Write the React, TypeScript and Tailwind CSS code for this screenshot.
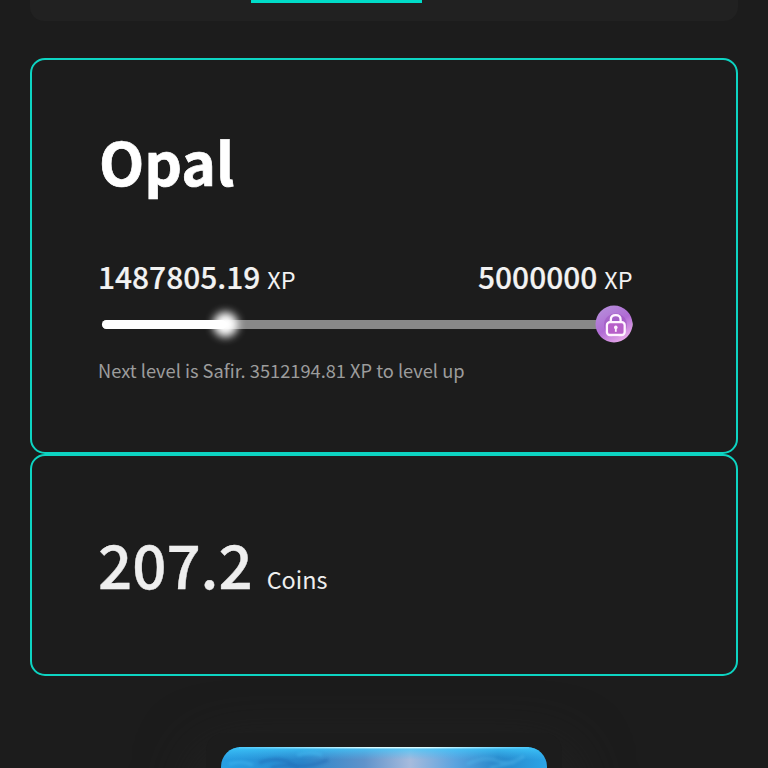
import React from 'react';

interface AmountProps {
  value: string;
  unit: string;
}

const XpAmount: React.FC<AmountProps> = ({ value, unit }) => (
  <div className="flex items-baseline gap-[7px] whitespace-nowrap leading-[44px] text-[#f2f2f2]">
    <span className="text-[29.9px] font-medium [-webkit-text-stroke:0.2px_#f2f2f2]">{value}</span>
    <span className="text-[23.4px]">{unit}</span>
  </div>
);

const LockBadge: React.FC = () => (
  <svg className="absolute right-0 -top-[15px] h-[38px] w-[38px]" viewBox="0 0 38 38" fill="none">
    <defs>
      <linearGradient id="badge" x1="8" y1="4" x2="28" y2="36" gradientUnits="userSpaceOnUse">
        <stop stopColor="#b58ada" />
        <stop offset="0.5" stopColor="#b06bd4" />
        <stop offset="1" stopColor="#e8a9ea" />
      </linearGradient>
    </defs>
    <circle cx="19" cy="19" r="18.5" fill="url(#badge)" />
    <circle cx="20.5" cy="20" r="11.5" fill="#8f3fb3" opacity="0.35" />
    <path d="M15.8 18v-3.3c0-3 2-4.6 4.9-4.6s4.9 1.6 4.9 4.6V18" stroke="#fff4ff" strokeWidth="2.3" />
    <rect x="11.9" y="17.2" width="17.8" height="12.8" rx="3" fill="#b760c9" stroke="#fff4ff" strokeWidth="2.3" />
    <circle cx="20.8" cy="22.4" r="1.8" fill="#fff4ff" />
    <path d="M20.8 22.8v4" stroke="#fff4ff" strokeWidth="1.8" />
  </svg>
);

const LevelProgress: React.FC = () => (
  <div className="relative ml-[3px] h-[9px] w-[531px] rounded-full bg-[#888888]">
    <div className="relative h-full w-[124px] rounded-full bg-white">
      <div className="absolute -right-[12px] -top-[8px] h-[25px] w-[25px] rounded-full bg-white blur-[4.5px]" />
    </div>
    <LockBadge />
  </div>
);

const LevelCard: React.FC = () => (
  <section className="h-[396px] rounded-[15px] border-2 border-[#0dd4c2] pl-[67px] pt-[57px]">
    <h1 className="h-[88px] text-[58.8px] font-bold leading-[87px] text-white [-webkit-text-stroke:0.7px_white]">Opal</h1>
    <div className="-ml-px mt-[49px] flex h-[44px] w-[534.5px] justify-between">
      <XpAmount value="1487805.19" unit="XP" />
      <XpAmount value="5000000" unit="XP" />
    </div>
    <div className="mt-[22px]">
      <LevelProgress />
    </div>
    <p className="-ml-px mt-[26px] whitespace-nowrap text-[18.25px] leading-[30px] text-[#9c9c9c]">
      Next level is Safir. 3512194.81 XP to level up
    </p>
  </section>
);

const CoinsCard: React.FC = () => (
  <section className="h-[222px] rounded-[15px] border-2 border-[#0dd4c2] pl-[67px] pt-[63px]">
    <div className="-ml-px flex items-baseline gap-[14px] whitespace-nowrap leading-[88px] text-[#eeeeee]">
      <span className="text-[60px] font-medium [-webkit-text-stroke:0.4px_#eeeeee]">207.2</span>
      <span className="text-[23.4px]">Coins</span>
    </div>
  </section>
);

const WaterBanner: React.FC = () => (
  <div className="mx-auto mt-[57px] h-[80px] w-[356px] rounded-t-[18px] bg-[#1c1c1c] px-[15px] pt-[14px] shadow-[0_25px_60px_8px_#242424]">
    <svg className="h-[70px] w-[326px] rounded-t-[20px]" viewBox="0 0 326 70" preserveAspectRatio="none">
      <defs>
        <linearGradient id="water" x1="0" x2="1" y1="0" y2="0">
          <stop stopColor="#27a0e4" />
          <stop offset="0.25" stopColor="#2a85ca" />
          <stop offset="0.44" stopColor="#5f93cb" />
          <stop offset="0.58" stopColor="#a6bbdd" />
          <stop offset="0.72" stopColor="#5aa3df" />
          <stop offset="0.85" stopColor="#2786c9" />
          <stop offset="1" stopColor="#2ca5e7" />
        </linearGradient>
        <linearGradient id="shine" x1="0" x2="0" y1="0" y2="1">
          <stop stopColor="#40d0ff" stopOpacity="0.8" />
          <stop offset="0.18" stopColor="#40c0fa" stopOpacity="0" />
        </linearGradient>
        <linearGradient id="rim" x1="18" x2="308" y1="0" y2="0" gradientUnits="userSpaceOnUse">
          <stop stopColor="#4cc8fa" />
          <stop offset="0.45" stopColor="#dcfbff" />
          <stop offset="0.65" stopColor="#dcfbff" />
          <stop offset="1" stopColor="#4cc8fa" />
        </linearGradient>
        <filter id="soft" x="-10%" y="-50%" width="120%" height="200%">
          <feGaussianBlur stdDeviation="1.6" />
        </filter>
      </defs>
      <rect width="326" height="70" fill="url(#water)" />
      <rect width="326" height="70" fill="url(#shine)" />
      <g filter="url(#soft)" strokeWidth="3" fill="none" opacity="0.45">
        <path d="M38 16q18-7 31 0t38-3M50 21q14-5 28 0" stroke="#1b60ad" />
        <path d="M246 17q18-8 31-3t26-5M269 21q14-3 25-6" stroke="#54bdf0" />
        <path d="M8 17q12-4 24 1M76 8q14-4 25 0" stroke="#4ac0f5" />
      </g>
      <rect x="18" width="290" height="1.4" fill="url(#rim)" />
    </svg>
  </div>
);

const App: React.FC = () => (
  <main className="h-[768px] w-[768px] overflow-hidden bg-[#1c1c1c] px-[30px] font-['Noto_Sans_CJK_TC','Noto_Sans_CJK_SC',sans-serif]">
    <div className="h-[21px] rounded-b-[14px] bg-[#212121] pl-[221px]">
      <div className="h-[3px] w-[171px] bg-[#00dcc8]" />
    </div>
    <div className="mt-[37px]">
      <LevelCard />
      <CoinsCard />
    </div>
    <WaterBanner />
  </main>
);

export default App;
